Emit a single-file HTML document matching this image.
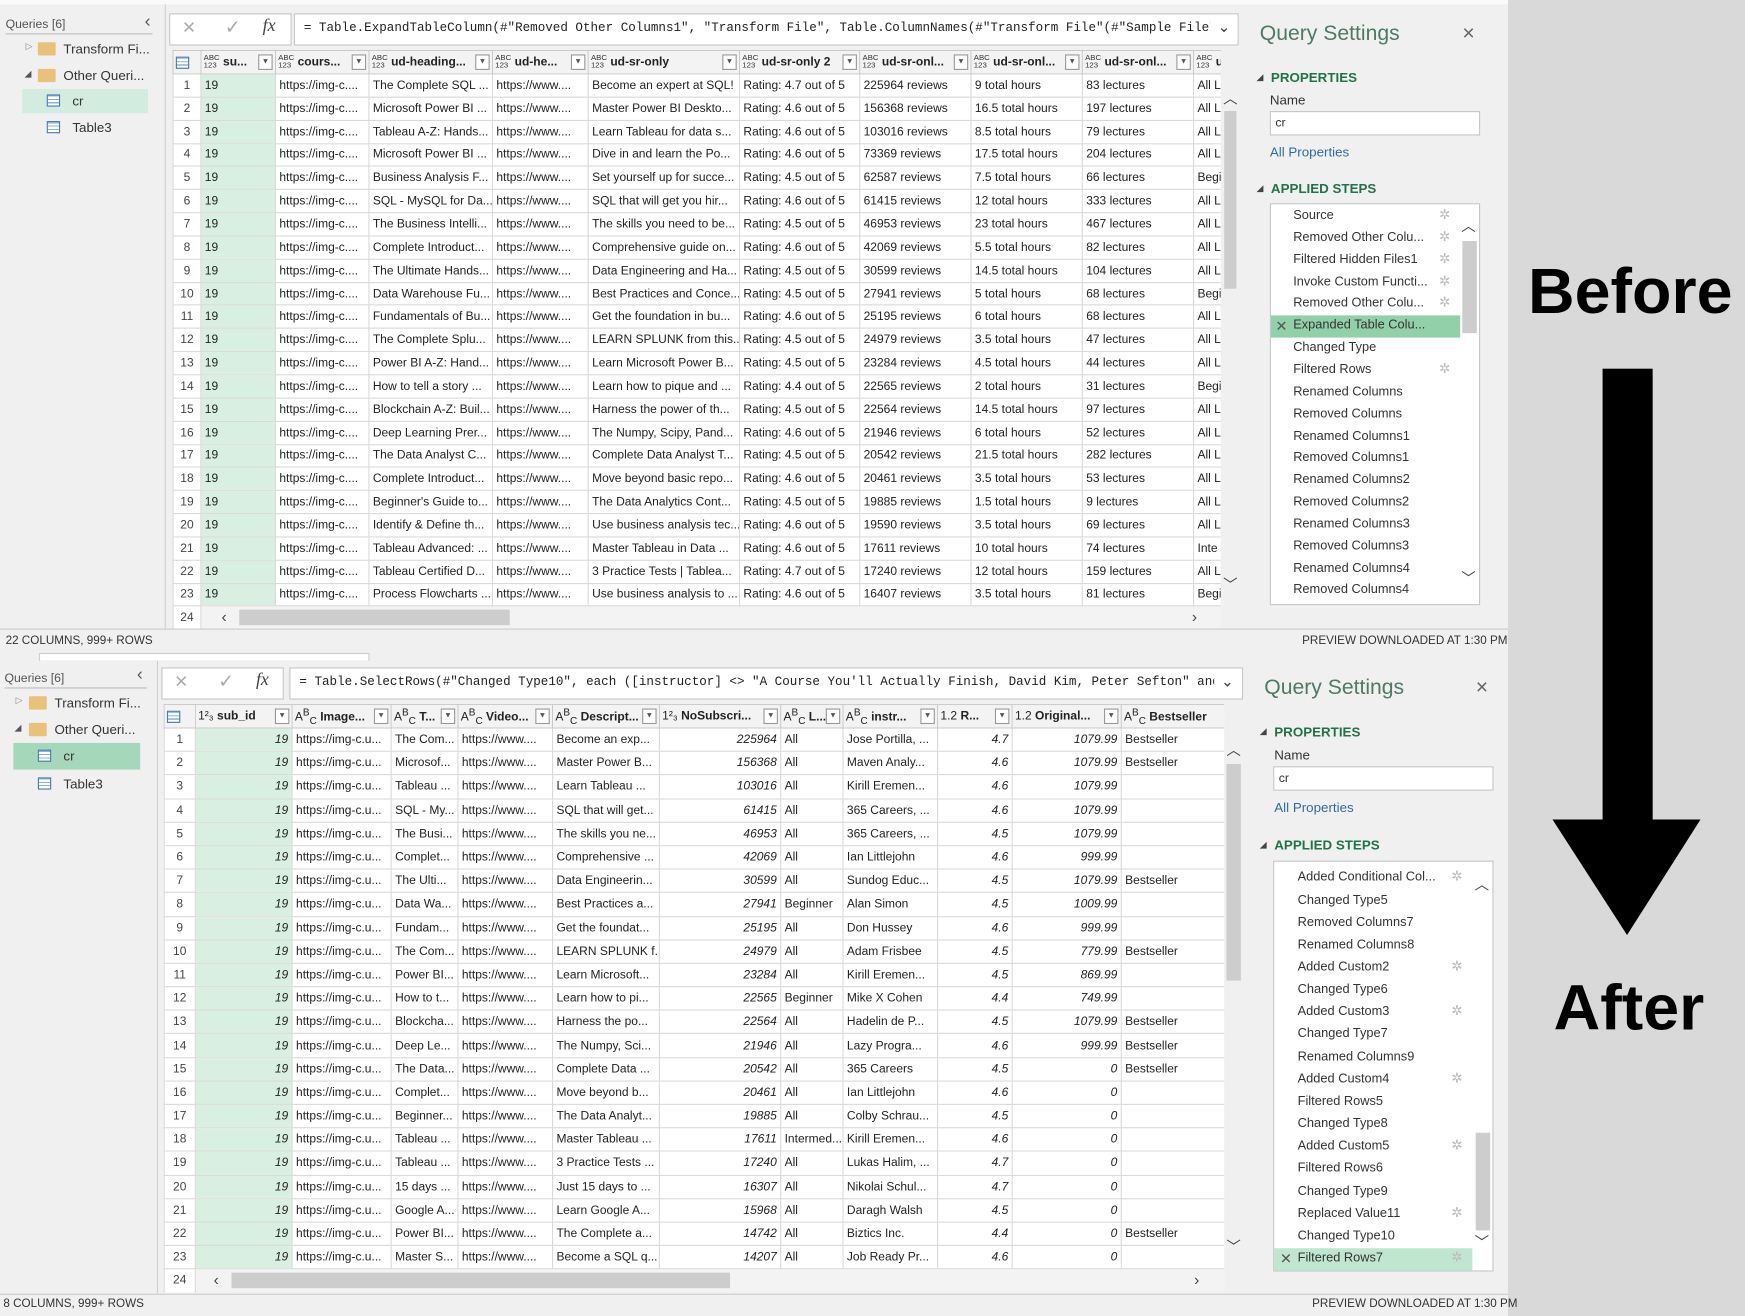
<!DOCTYPE html>
<html><head><meta charset="utf-8"><style>
*{box-sizing:border-box;margin:0;padding:0}
html,body{width:1745px;height:1316px;overflow:hidden;background:#d9d9d9;font-family:"Liberation Sans",sans-serif}
#w{position:absolute;left:0;top:0;width:1568px;height:1185px;transform:scale(1.1129,1.1105);transform-origin:0 0;background:#d9d9d9}
.a{position:absolute}
.panel{background:#f0f0f0}
.t{position:absolute;font-size:11.5px;color:#333;white-space:nowrap}
table{border-collapse:collapse;table-layout:fixed;font-size:10.8px;color:#222}
td{border:1px solid #dadada;padding:0 3px;white-space:nowrap;overflow:hidden;background:#fff}
td.n{text-align:center;color:#444}
td.g{background:#d9efe2}
td.r{text-align:right;font-style:italic}
th{border:1px solid #c9c9c9;background:#f3f3f3;font-weight:bold;font-size:10.8px;text-align:left;padding:0 2px;white-space:nowrap;overflow:hidden;position:relative}
.ty{display:inline-block;font-size:7px;line-height:7px;vertical-align:middle;font-weight:normal;margin-right:3px;color:#333}
.dd{position:absolute;right:2px;top:3px;width:13px;height:14px;border:1px solid #999;background:#fff;font-size:7px;text-align:center;line-height:12px;color:#555;font-weight:normal}
.fb{position:absolute;background:#fff;border:1px solid #c6c6c6;overflow:hidden}
.mono{font-family:"Liberation Mono",monospace;font-size:11.3px;color:#222}
.qs{font-size:19px;color:#4d7a62}
.hd{font-size:12px;font-weight:bold;color:#217346}
.step{position:absolute;font-size:11.5px;color:#333;white-space:nowrap}
.gear{position:absolute;font-size:12px;color:#bbb}
.fold{position:absolute;width:16px;height:12px;background:#e8c27a;border-radius:1px}
.tic{position:absolute;width:12px;height:11px;border:1px solid #4a7cb5;background:repeating-linear-gradient(0deg,#fff 0 2px,#8fb0d6 2px 3px)}
</style></head><body><div id="w">

<div class="a panel" style="left:0;top:0;width:1355px;height:566px"></div>
<div class="a" style="left:1355px;top:0;width:213px;height:1185px;background:#d9d9d9"></div>
<div class="a" style="left:0;top:0;width:1355px;height:4px;background:#fafafa"></div>
<div class="t" style="left:5px;top:16px;font-size:11px;color:#555">Queries [6]</div>
<div class="a" style="left:5px;top:30px;width:132px;height:1px;background:#bbb"></div>
<div class="t" style="left:130px;top:11px;font-size:16px;color:#555">‹</div>
<div class="t" style="left:23px;top:37px;font-size:8px;color:#888">▷</div>
<div class="fold" style="left:34px;top:38px"></div>
<div class="t" style="left:57px;top:37px;font-size:12px">Transform Fi...</div>
<div class="t" style="left:22px;top:62px;font-size:8px;color:#555">◢</div>
<div class="fold" style="left:34px;top:62px"></div>
<div class="t" style="left:57px;top:61px;font-size:12px">Other Queri...</div>
<div class="a" style="left:20px;top:80px;width:113px;height:22px;background:#d3ece0"></div>
<div class="tic" style="left:42px;top:85px"></div>
<div class="t" style="left:65px;top:84px;font-size:12px">cr</div>
<div class="tic" style="left:42px;top:109px"></div>
<div class="t" style="left:65px;top:108px;font-size:12px">Table3</div>
<div class="a" style="left:148px;top:4px;width:1px;height:562px;background:#d0d0d0"></div>

<div class="fb" style="left:152px;top:12px;width:110px;height:29px"></div>
<div class="t" style="left:164px;top:14px;font-size:20px;color:#aaa">×</div>
<div class="t" style="left:202px;top:15px;font-size:17px;color:#aaa">✓</div>
<div class="t" style="left:236px;top:15px;font-size:16px;font-style:italic;font-family:'Liberation Serif',serif;color:#444">fx</div>
<div class="fb" style="left:264px;top:12px;width:849px;height:29px"><div class="t mono" style="left:8px;top:7px">= Table.ExpandTableColumn(#"Removed Other Columns1", "Transform File", Table.ColumnNames(#"Transform File"(#"Sample File")))</div></div>
<div class="a" style="left:1088px;top:13px;width:24px;height:27px;background:#fff"></div>
<div class="t" style="left:1094px;top:16px;font-size:14px;color:#444">⌄</div>

<div class="a" style="left:155px;top:45px;width:942px;height:521px;overflow:hidden;background:#fff">
<table style="width:942px">
<colgroup><col style="width:25px"><col style="width:67px"><col style="width:84px"><col style="width:111px"><col style="width:86px"><col style="width:136px"><col style="width:108px"><col style="width:100px"><col style="width:100px"><col style="width:100px"><col style="width:25px"></colgroup>
<tr style="height:21px"><th><span class="tic" style="position:static;display:inline-block;vertical-align:middle"></span></th><th><span class="ty">ABC<br>123</span>su...<span class="dd">▼</span></th><th><span class="ty">ABC<br>123</span>cours...<span class="dd">▼</span></th><th><span class="ty">ABC<br>123</span>ud-heading...<span class="dd">▼</span></th><th><span class="ty">ABC<br>123</span>ud-he...<span class="dd">▼</span></th><th><span class="ty">ABC<br>123</span>ud-sr-only<span class="dd">▼</span></th><th><span class="ty">ABC<br>123</span>ud-sr-only 2<span class="dd">▼</span></th><th><span class="ty">ABC<br>123</span>ud-sr-onl...<span class="dd">▼</span></th><th><span class="ty">ABC<br>123</span>ud-sr-onl...<span class="dd">▼</span></th><th><span class="ty">ABC<br>123</span>ud-sr-onl...<span class="dd">▼</span></th><th><span class="ty">ABC<br>123</span>ud-</th></tr>
<tr style="height:20.85px"><td class="n">1</td><td class="g">19</td><td>https://img-c....</td><td>The Complete SQL ...</td><td>https://www....</td><td>Become an expert at SQL!</td><td>Rating: 4.7 out of 5</td><td>225964 reviews</td><td>9 total hours</td><td>83 lectures</td><td>All L</td></tr>
<tr style="height:20.85px"><td class="n">2</td><td class="g">19</td><td>https://img-c....</td><td>Microsoft Power BI ...</td><td>https://www....</td><td>Master Power BI Deskto...</td><td>Rating: 4.6 out of 5</td><td>156368 reviews</td><td>16.5 total hours</td><td>197 lectures</td><td>All L</td></tr>
<tr style="height:20.85px"><td class="n">3</td><td class="g">19</td><td>https://img-c....</td><td>Tableau A-Z: Hands...</td><td>https://www....</td><td>Learn Tableau for data s...</td><td>Rating: 4.6 out of 5</td><td>103016 reviews</td><td>8.5 total hours</td><td>79 lectures</td><td>All L</td></tr>
<tr style="height:20.85px"><td class="n">4</td><td class="g">19</td><td>https://img-c....</td><td>Microsoft Power BI ...</td><td>https://www....</td><td>Dive in and learn the Po...</td><td>Rating: 4.6 out of 5</td><td>73369 reviews</td><td>17.5 total hours</td><td>204 lectures</td><td>All L</td></tr>
<tr style="height:20.85px"><td class="n">5</td><td class="g">19</td><td>https://img-c....</td><td>Business Analysis F...</td><td>https://www....</td><td>Set yourself up for succe...</td><td>Rating: 4.5 out of 5</td><td>62587 reviews</td><td>7.5 total hours</td><td>66 lectures</td><td>Begi</td></tr>
<tr style="height:20.85px"><td class="n">6</td><td class="g">19</td><td>https://img-c....</td><td>SQL - MySQL for Da...</td><td>https://www....</td><td>SQL that will get you hir...</td><td>Rating: 4.6 out of 5</td><td>61415 reviews</td><td>12 total hours</td><td>333 lectures</td><td>All L</td></tr>
<tr style="height:20.85px"><td class="n">7</td><td class="g">19</td><td>https://img-c....</td><td>The Business Intelli...</td><td>https://www....</td><td>The skills you need to be...</td><td>Rating: 4.5 out of 5</td><td>46953 reviews</td><td>23 total hours</td><td>467 lectures</td><td>All L</td></tr>
<tr style="height:20.85px"><td class="n">8</td><td class="g">19</td><td>https://img-c....</td><td>Complete Introduct...</td><td>https://www....</td><td>Comprehensive guide on...</td><td>Rating: 4.6 out of 5</td><td>42069 reviews</td><td>5.5 total hours</td><td>82 lectures</td><td>All L</td></tr>
<tr style="height:20.85px"><td class="n">9</td><td class="g">19</td><td>https://img-c....</td><td>The Ultimate Hands...</td><td>https://www....</td><td>Data Engineering and Ha...</td><td>Rating: 4.5 out of 5</td><td>30599 reviews</td><td>14.5 total hours</td><td>104 lectures</td><td>All L</td></tr>
<tr style="height:20.85px"><td class="n">10</td><td class="g">19</td><td>https://img-c....</td><td>Data Warehouse Fu...</td><td>https://www....</td><td>Best Practices and Conce...</td><td>Rating: 4.5 out of 5</td><td>27941 reviews</td><td>5 total hours</td><td>68 lectures</td><td>Begi</td></tr>
<tr style="height:20.85px"><td class="n">11</td><td class="g">19</td><td>https://img-c....</td><td>Fundamentals of Bu...</td><td>https://www....</td><td>Get the foundation in bu...</td><td>Rating: 4.6 out of 5</td><td>25195 reviews</td><td>6 total hours</td><td>68 lectures</td><td>All L</td></tr>
<tr style="height:20.85px"><td class="n">12</td><td class="g">19</td><td>https://img-c....</td><td>The Complete Splu...</td><td>https://www....</td><td>LEARN SPLUNK from this...</td><td>Rating: 4.5 out of 5</td><td>24979 reviews</td><td>3.5 total hours</td><td>47 lectures</td><td>All L</td></tr>
<tr style="height:20.85px"><td class="n">13</td><td class="g">19</td><td>https://img-c....</td><td>Power BI A-Z: Hand...</td><td>https://www....</td><td>Learn Microsoft Power B...</td><td>Rating: 4.5 out of 5</td><td>23284 reviews</td><td>4.5 total hours</td><td>44 lectures</td><td>All L</td></tr>
<tr style="height:20.85px"><td class="n">14</td><td class="g">19</td><td>https://img-c....</td><td>How to tell a story ...</td><td>https://www....</td><td>Learn how to pique and ...</td><td>Rating: 4.4 out of 5</td><td>22565 reviews</td><td>2 total hours</td><td>31 lectures</td><td>Begi</td></tr>
<tr style="height:20.85px"><td class="n">15</td><td class="g">19</td><td>https://img-c....</td><td>Blockchain A-Z: Buil...</td><td>https://www....</td><td>Harness the power of th...</td><td>Rating: 4.5 out of 5</td><td>22564 reviews</td><td>14.5 total hours</td><td>97 lectures</td><td>All L</td></tr>
<tr style="height:20.85px"><td class="n">16</td><td class="g">19</td><td>https://img-c....</td><td>Deep Learning Prer...</td><td>https://www....</td><td>The Numpy, Scipy, Pand...</td><td>Rating: 4.6 out of 5</td><td>21946 reviews</td><td>6 total hours</td><td>52 lectures</td><td>All L</td></tr>
<tr style="height:20.85px"><td class="n">17</td><td class="g">19</td><td>https://img-c....</td><td>The Data Analyst C...</td><td>https://www....</td><td>Complete Data Analyst T...</td><td>Rating: 4.5 out of 5</td><td>20542 reviews</td><td>21.5 total hours</td><td>282 lectures</td><td>All L</td></tr>
<tr style="height:20.85px"><td class="n">18</td><td class="g">19</td><td>https://img-c....</td><td>Complete Introduct...</td><td>https://www....</td><td>Move beyond basic repo...</td><td>Rating: 4.6 out of 5</td><td>20461 reviews</td><td>3.5 total hours</td><td>53 lectures</td><td>All L</td></tr>
<tr style="height:20.85px"><td class="n">19</td><td class="g">19</td><td>https://img-c....</td><td>Beginner's Guide to...</td><td>https://www....</td><td>The Data Analytics Cont...</td><td>Rating: 4.5 out of 5</td><td>19885 reviews</td><td>1.5 total hours</td><td>9 lectures</td><td>All L</td></tr>
<tr style="height:20.85px"><td class="n">20</td><td class="g">19</td><td>https://img-c....</td><td>Identify &amp; Define th...</td><td>https://www....</td><td>Use business analysis tec...</td><td>Rating: 4.6 out of 5</td><td>19590 reviews</td><td>3.5 total hours</td><td>69 lectures</td><td>All L</td></tr>
<tr style="height:20.85px"><td class="n">21</td><td class="g">19</td><td>https://img-c....</td><td>Tableau Advanced: ...</td><td>https://www....</td><td>Master Tableau in Data ...</td><td>Rating: 4.6 out of 5</td><td>17611 reviews</td><td>10 total hours</td><td>74 lectures</td><td>Inte</td></tr>
<tr style="height:20.85px"><td class="n">22</td><td class="g">19</td><td>https://img-c....</td><td>Tableau Certified D...</td><td>https://www....</td><td>3 Practice Tests | Tablea...</td><td>Rating: 4.7 out of 5</td><td>17240 reviews</td><td>12 total hours</td><td>159 lectures</td><td>All L</td></tr>
<tr style="height:20.85px"><td class="n">23</td><td class="g">19</td><td>https://img-c....</td><td>Process Flowcharts ...</td><td>https://www....</td><td>Use business analysis to ...</td><td>Rating: 4.6 out of 5</td><td>16407 reviews</td><td>3.5 total hours</td><td>81 lectures</td><td>Begi</td></tr>
<tr style="height:20.85px"><td class="n">24</td><td colspan="10" style="background:#f3f3f3"></td></tr>
</table></div>
<div class="a" style="left:1097px;top:73px;width:16px;height:472px;background:#f0f0f0"></div>
<div class="t" style="left:1099px;top:78px;font-size:13px;color:#444">︿</div>
<div class="a" style="left:1100px;top:100px;width:11px;height:160px;background:#cdcdcd"></div>
<div class="t" style="left:1099px;top:516px;font-size:13px;color:#444">﹀</div>
<div class="t" style="left:199px;top:547px;font-size:14px;color:#444">‹</div>
<div class="a" style="left:215px;top:549px;width:243px;height:14px;background:#cdcdcd"></div>
<div class="t" style="left:1071px;top:547px;font-size:14px;color:#444">›</div>

<div class="t qs" style="left:1132px;top:20px">Query Settings</div>
<div class="t" style="left:1314px;top:20px;font-size:19px;color:#666">×</div>
<div class="t" style="left:1129px;top:65px;font-size:8px;color:#444">◢</div>
<div class="t hd" style="left:1142px;top:63px">PROPERTIES</div>
<div class="t" style="left:1141px;top:83px;font-size:12px">Name</div>
<div class="fb" style="left:1141px;top:100px;width:189px;height:22px"></div>
<div class="t" style="left:1146px;top:105px;font-size:11px">cr</div>
<div class="t" style="left:1141px;top:130px;font-size:12px;color:#2f6aa8">All Properties</div>
<div class="t" style="left:1129px;top:165px;font-size:8px;color:#444">◢</div>
<div class="t hd" style="left:1142px;top:163px">APPLIED STEPS</div>
<div class="fb" style="left:1141px;top:183px;width:189px;height:362px"></div>
<div class="a" style="left:1142px;top:284px;width:170px;height:20px;background:#92d0aa"></div>
<div class="a" style="left:1314px;top:217px;width:13px;height:83px;background:#cdcdcd"></div>
<div class="t" style="left:1313px;top:193px;font-size:13px;color:#444">︿</div>
<div class="t" style="left:1313px;top:510px;font-size:13px;color:#444">﹀</div>
<div class="step" style="left:1162px;top:188px">Source</div><div class="gear" style="left:1293px;top:186px">✲</div>
<div class="step" style="left:1162px;top:208px">Removed Other Colu...</div><div class="gear" style="left:1293px;top:206px">✲</div>
<div class="step" style="left:1162px;top:228px">Filtered Hidden Files1</div><div class="gear" style="left:1293px;top:226px">✲</div>
<div class="step" style="left:1162px;top:248px">Invoke Custom Functi...</div><div class="gear" style="left:1293px;top:246px">✲</div>
<div class="step" style="left:1162px;top:267px">Removed Other Colu...</div><div class="gear" style="left:1293px;top:265px">✲</div>
<div class="step" style="left:1146px;top:286px;font-size:13px;color:#555">✕</div>
<div class="step" style="left:1162px;top:287px">Expanded Table Colu...</div>
<div class="step" style="left:1162px;top:307px">Changed Type</div>
<div class="step" style="left:1162px;top:327px">Filtered Rows</div><div class="gear" style="left:1293px;top:325px">✲</div>
<div class="step" style="left:1162px;top:347px">Renamed Columns</div>
<div class="step" style="left:1162px;top:367px">Removed Columns</div>
<div class="step" style="left:1162px;top:387px">Renamed Columns1</div>
<div class="step" style="left:1162px;top:406px">Removed Columns1</div>
<div class="step" style="left:1162px;top:426px">Renamed Columns2</div>
<div class="step" style="left:1162px;top:446px">Removed Columns2</div>
<div class="step" style="left:1162px;top:466px">Renamed Columns3</div>
<div class="step" style="left:1162px;top:486px">Removed Columns3</div>
<div class="step" style="left:1162px;top:506px">Renamed Columns4</div>
<div class="step" style="left:1162px;top:525px">Removed Columns4</div>

<div class="a panel" style="left:0;top:566px;width:1355px;height:30px;background:#f0f0f0"></div>
<div class="a" style="left:0;top:566px;width:1355px;height:1px;background:#ccc"></div>
<div class="t" style="left:5px;top:571px;font-size:10.5px">22 COLUMNS, 999+ ROWS</div>
<div class="t" style="left:1170px;top:571px;font-size:10.5px">PREVIEW DOWNLOADED AT 1:30 PM</div>
<div class="a" style="left:35px;top:588px;width:297px;height:8px;background:#fff;border:1px solid #ccc"></div>

<div class="a panel" style="left:0;top:595px;width:1355px;height:590px"></div>
<div class="t" style="left:4px;top:605px;font-size:11px;color:#555">Queries [6]</div>
<div class="a" style="left:4px;top:619px;width:128px;height:1px;background:#bbb"></div>
<div class="t" style="left:123px;top:599px;font-size:16px;color:#555">‹</div>
<div class="t" style="left:14px;top:626px;font-size:8px;color:#888">▷</div>
<div class="fold" style="left:26px;top:627px"></div>
<div class="t" style="left:49px;top:626px;font-size:12px">Transform Fi...</div>
<div class="t" style="left:13px;top:651px;font-size:8px;color:#555">◢</div>
<div class="fold" style="left:26px;top:651px"></div>
<div class="t" style="left:49px;top:650px;font-size:12px">Other Queri...</div>
<div class="a" style="left:12px;top:669px;width:114px;height:24px;background:#a5d8ba"></div>
<div class="tic" style="left:34px;top:675px"></div>
<div class="t" style="left:57px;top:674px;font-size:12px">cr</div>
<div class="tic" style="left:34px;top:700px"></div>
<div class="t" style="left:57px;top:699px;font-size:12px">Table3</div>
<div class="a" style="left:141px;top:595px;width:1px;height:570px;background:#d0d0d0"></div>

<div class="fb" style="left:145px;top:601px;width:110px;height:29px"></div>
<div class="t" style="left:157px;top:603px;font-size:20px;color:#aaa">×</div>
<div class="t" style="left:196px;top:604px;font-size:17px;color:#aaa">✓</div>
<div class="t" style="left:230px;top:604px;font-size:16px;font-style:italic;font-family:'Liberation Serif',serif;color:#444">fx</div>
<div class="fb" style="left:260px;top:601px;width:857px;height:29px"><div class="t mono" style="left:8px;top:7px">= Table.SelectRows(#"Changed Type10", each ([instructor] &lt;&gt; "A Course You'll Actually Finish, David Kim, Peter Sefton" and</div></div>
<div class="a" style="left:1091px;top:602px;width:25px;height:27px;background:#fff"></div>
<div class="t" style="left:1097px;top:605px;font-size:14px;color:#444">⌄</div>

<div class="a" style="left:147px;top:634px;width:953px;height:530px;overflow:hidden;background:#fff">
<table style="width:963px">
<colgroup><col style="width:28px"><col style="width:87px"><col style="width:89px"><col style="width:60px"><col style="width:85px"><col style="width:96px"><col style="width:109px"><col style="width:56px"><col style="width:85px"><col style="width:67px"><col style="width:98px"><col style="width:103px"></colgroup>
<tr style="height:21px"><th><span class="tic" style="position:static;display:inline-block;vertical-align:middle"></span></th><th><span style="font-weight:normal">1²₃</span> sub_id<span class="dd">▼</span></th><th><span style="font-weight:normal">A<sup>B</sup><sub>C</sub></span> Image...<span class="dd">▼</span></th><th><span style="font-weight:normal">A<sup>B</sup><sub>C</sub></span> T...<span class="dd">▼</span></th><th><span style="font-weight:normal">A<sup>B</sup><sub>C</sub></span> Video...<span class="dd">▼</span></th><th><span style="font-weight:normal">A<sup>B</sup><sub>C</sub></span> Descript...<span class="dd">▼</span></th><th><span style="font-weight:normal">1²₃</span> NoSubscri...<span class="dd">▼</span></th><th><span style="font-weight:normal">A<sup>B</sup><sub>C</sub></span> L...<span class="dd">▼</span></th><th><span style="font-weight:normal">A<sup>B</sup><sub>C</sub></span> instr...<span class="dd">▼</span></th><th><span style="font-weight:normal">1.2</span> R...<span class="dd">▼</span></th><th><span style="font-weight:normal">1.2</span> Original...<span class="dd">▼</span></th><th><span style="font-weight:normal">A<sup>B</sup><sub>C</sub></span> Bestseller</th></tr>
<tr style="height:21.2px"><td class="n">1</td><td class="g r">19</td><td>https://img-c.u...</td><td>The Com...</td><td>https://www....</td><td>Become an exp...</td><td class="r">225964</td><td>All</td><td>Jose Portilla, ...</td><td class="r">4.7</td><td class="r">1079.99</td><td>Bestseller</td></tr>
<tr style="height:21.2px"><td class="n">2</td><td class="g r">19</td><td>https://img-c.u...</td><td>Microsof...</td><td>https://www....</td><td>Master Power B...</td><td class="r">156368</td><td>All</td><td>Maven Analy...</td><td class="r">4.6</td><td class="r">1079.99</td><td>Bestseller</td></tr>
<tr style="height:21.2px"><td class="n">3</td><td class="g r">19</td><td>https://img-c.u...</td><td>Tableau ...</td><td>https://www....</td><td>Learn Tableau ...</td><td class="r">103016</td><td>All</td><td>Kirill Eremen...</td><td class="r">4.6</td><td class="r">1079.99</td><td></td></tr>
<tr style="height:21.2px"><td class="n">4</td><td class="g r">19</td><td>https://img-c.u...</td><td>SQL - My...</td><td>https://www....</td><td>SQL that will get...</td><td class="r">61415</td><td>All</td><td>365 Careers, ...</td><td class="r">4.6</td><td class="r">1079.99</td><td></td></tr>
<tr style="height:21.2px"><td class="n">5</td><td class="g r">19</td><td>https://img-c.u...</td><td>The Busi...</td><td>https://www....</td><td>The skills you ne...</td><td class="r">46953</td><td>All</td><td>365 Careers, ...</td><td class="r">4.5</td><td class="r">1079.99</td><td></td></tr>
<tr style="height:21.2px"><td class="n">6</td><td class="g r">19</td><td>https://img-c.u...</td><td>Complet...</td><td>https://www....</td><td>Comprehensive ...</td><td class="r">42069</td><td>All</td><td>Ian Littlejohn</td><td class="r">4.6</td><td class="r">999.99</td><td></td></tr>
<tr style="height:21.2px"><td class="n">7</td><td class="g r">19</td><td>https://img-c.u...</td><td>The Ulti...</td><td>https://www....</td><td>Data Engineerin...</td><td class="r">30599</td><td>All</td><td>Sundog Educ...</td><td class="r">4.5</td><td class="r">1079.99</td><td>Bestseller</td></tr>
<tr style="height:21.2px"><td class="n">8</td><td class="g r">19</td><td>https://img-c.u...</td><td>Data Wa...</td><td>https://www....</td><td>Best Practices a...</td><td class="r">27941</td><td>Beginner</td><td>Alan Simon</td><td class="r">4.5</td><td class="r">1009.99</td><td></td></tr>
<tr style="height:21.2px"><td class="n">9</td><td class="g r">19</td><td>https://img-c.u...</td><td>Fundam...</td><td>https://www....</td><td>Get the foundat...</td><td class="r">25195</td><td>All</td><td>Don Hussey</td><td class="r">4.6</td><td class="r">999.99</td><td></td></tr>
<tr style="height:21.2px"><td class="n">10</td><td class="g r">19</td><td>https://img-c.u...</td><td>The Com...</td><td>https://www....</td><td>LEARN SPLUNK f...</td><td class="r">24979</td><td>All</td><td>Adam Frisbee</td><td class="r">4.5</td><td class="r">779.99</td><td>Bestseller</td></tr>
<tr style="height:21.2px"><td class="n">11</td><td class="g r">19</td><td>https://img-c.u...</td><td>Power BI...</td><td>https://www....</td><td>Learn Microsoft...</td><td class="r">23284</td><td>All</td><td>Kirill Eremen...</td><td class="r">4.5</td><td class="r">869.99</td><td></td></tr>
<tr style="height:21.2px"><td class="n">12</td><td class="g r">19</td><td>https://img-c.u...</td><td>How to t...</td><td>https://www....</td><td>Learn how to pi...</td><td class="r">22565</td><td>Beginner</td><td>Mike X Cohen</td><td class="r">4.4</td><td class="r">749.99</td><td></td></tr>
<tr style="height:21.2px"><td class="n">13</td><td class="g r">19</td><td>https://img-c.u...</td><td>Blockcha...</td><td>https://www....</td><td>Harness the po...</td><td class="r">22564</td><td>All</td><td>Hadelin de P...</td><td class="r">4.5</td><td class="r">1079.99</td><td>Bestseller</td></tr>
<tr style="height:21.2px"><td class="n">14</td><td class="g r">19</td><td>https://img-c.u...</td><td>Deep Le...</td><td>https://www....</td><td>The Numpy, Sci...</td><td class="r">21946</td><td>All</td><td>Lazy Progra...</td><td class="r">4.6</td><td class="r">999.99</td><td>Bestseller</td></tr>
<tr style="height:21.2px"><td class="n">15</td><td class="g r">19</td><td>https://img-c.u...</td><td>The Data...</td><td>https://www....</td><td>Complete Data ...</td><td class="r">20542</td><td>All</td><td>365 Careers</td><td class="r">4.5</td><td class="r">0</td><td>Bestseller</td></tr>
<tr style="height:21.2px"><td class="n">16</td><td class="g r">19</td><td>https://img-c.u...</td><td>Complet...</td><td>https://www....</td><td>Move beyond b...</td><td class="r">20461</td><td>All</td><td>Ian Littlejohn</td><td class="r">4.6</td><td class="r">0</td><td></td></tr>
<tr style="height:21.2px"><td class="n">17</td><td class="g r">19</td><td>https://img-c.u...</td><td>Beginner...</td><td>https://www....</td><td>The Data Analyt...</td><td class="r">19885</td><td>All</td><td>Colby Schrau...</td><td class="r">4.5</td><td class="r">0</td><td></td></tr>
<tr style="height:21.2px"><td class="n">18</td><td class="g r">19</td><td>https://img-c.u...</td><td>Tableau ...</td><td>https://www....</td><td>Master Tableau ...</td><td class="r">17611</td><td>Intermed...</td><td>Kirill Eremen...</td><td class="r">4.6</td><td class="r">0</td><td></td></tr>
<tr style="height:21.2px"><td class="n">19</td><td class="g r">19</td><td>https://img-c.u...</td><td>Tableau ...</td><td>https://www....</td><td>3 Practice Tests ...</td><td class="r">17240</td><td>All</td><td>Lukas Halim, ...</td><td class="r">4.7</td><td class="r">0</td><td></td></tr>
<tr style="height:21.2px"><td class="n">20</td><td class="g r">19</td><td>https://img-c.u...</td><td>15 days ...</td><td>https://www....</td><td>Just 15 days to ...</td><td class="r">16307</td><td>All</td><td>Nikolai Schul...</td><td class="r">4.7</td><td class="r">0</td><td></td></tr>
<tr style="height:21.2px"><td class="n">21</td><td class="g r">19</td><td>https://img-c.u...</td><td>Google A...</td><td>https://www....</td><td>Learn Google A...</td><td class="r">15968</td><td>All</td><td>Daragh Walsh</td><td class="r">4.5</td><td class="r">0</td><td></td></tr>
<tr style="height:21.2px"><td class="n">22</td><td class="g r">19</td><td>https://img-c.u...</td><td>Power BI...</td><td>https://www....</td><td>The Complete a...</td><td class="r">14742</td><td>All</td><td>Biztics Inc.</td><td class="r">4.4</td><td class="r">0</td><td>Bestseller</td></tr>
<tr style="height:21.2px"><td class="n">23</td><td class="g r">19</td><td>https://img-c.u...</td><td>Master S...</td><td>https://www....</td><td>Become a SQL q...</td><td class="r">14207</td><td>All</td><td>Job Ready Pr...</td><td class="r">4.6</td><td class="r">0</td><td></td></tr>
<tr style="height:21.2px"><td class="n">24</td><td colspan="11" style="background:#f3f3f3"></td></tr>
</table></div>
<div class="a" style="left:1100px;top:655px;width:17px;height:488px;background:#f0f0f0"></div>
<div class="t" style="left:1102px;top:665px;font-size:13px;color:#444">︿</div>
<div class="a" style="left:1102px;top:688px;width:13px;height:195px;background:#cdcdcd"></div>
<div class="t" style="left:1102px;top:1112px;font-size:13px;color:#444">﹀</div>
<div class="t" style="left:192px;top:1144px;font-size:14px;color:#444">‹</div>
<div class="a" style="left:208px;top:1146px;width:448px;height:14px;background:#cdcdcd"></div>
<div class="t" style="left:1073px;top:1144px;font-size:14px;color:#444">›</div>

<div class="t qs" style="left:1136px;top:609px">Query Settings</div>
<div class="t" style="left:1326px;top:609px;font-size:19px;color:#666">×</div>
<div class="t" style="left:1132px;top:654px;font-size:8px;color:#444">◢</div>
<div class="t hd" style="left:1145px;top:652px">PROPERTIES</div>
<div class="t" style="left:1145px;top:673px;font-size:12px">Name</div>
<div class="fb" style="left:1144px;top:690px;width:198px;height:22px"></div>
<div class="t" style="left:1149px;top:695px;font-size:11px">cr</div>
<div class="t" style="left:1145px;top:720px;font-size:12px;color:#2f6aa8">All Properties</div>
<div class="t" style="left:1132px;top:756px;font-size:8px;color:#444">◢</div>
<div class="t hd" style="left:1145px;top:754px">APPLIED STEPS</div>
<div class="fb" style="left:1144px;top:775px;width:198px;height:370px"></div>
<div class="a" style="left:1145px;top:1124px;width:178px;height:20px;background:#bfe6cf"></div>
<div class="a" style="left:1326px;top:1020px;width:13px;height:88px;background:#cdcdcd"></div>
<div class="t" style="left:1325px;top:786px;font-size:13px;color:#444">︿</div>
<div class="t" style="left:1325px;top:1108px;font-size:13px;color:#444">﹀</div>
<div class="step" style="left:1166px;top:784px">Added Conditional Col...</div><div class="gear" style="left:1304px;top:782px">✲</div>
<div class="step" style="left:1166px;top:805px">Changed Type5</div>
<div class="step" style="left:1166px;top:825px">Removed Columns7</div>
<div class="step" style="left:1166px;top:845px">Renamed Columns8</div>
<div class="step" style="left:1166px;top:865px">Added Custom2</div><div class="gear" style="left:1304px;top:863px">✲</div>
<div class="step" style="left:1166px;top:885px">Changed Type6</div>
<div class="step" style="left:1166px;top:905px">Added Custom3</div><div class="gear" style="left:1304px;top:903px">✲</div>
<div class="step" style="left:1166px;top:925px">Changed Type7</div>
<div class="step" style="left:1166px;top:946px">Renamed Columns9</div>
<div class="step" style="left:1166px;top:966px">Added Custom4</div><div class="gear" style="left:1304px;top:964px">✲</div>
<div class="step" style="left:1166px;top:986px">Filtered Rows5</div>
<div class="step" style="left:1166px;top:1006px">Changed Type8</div>
<div class="step" style="left:1166px;top:1026px">Added Custom5</div><div class="gear" style="left:1304px;top:1024px">✲</div>
<div class="step" style="left:1166px;top:1046px">Filtered Rows6</div>
<div class="step" style="left:1166px;top:1067px">Changed Type9</div>
<div class="step" style="left:1166px;top:1087px">Replaced Value11</div><div class="gear" style="left:1304px;top:1085px">✲</div>
<div class="step" style="left:1166px;top:1107px">Changed Type10</div>
<div class="step" style="left:1150px;top:1126px;font-size:13px;color:#555">✕</div>
<div class="step" style="left:1166px;top:1127px">Filtered Rows7</div><div class="gear" style="left:1304px;top:1125px">✲</div>

<div class="a" style="left:0;top:1165px;width:1355px;height:20px;background:#f0f0f0;border-top:1px solid #ccc"></div>
<div class="t" style="left:3px;top:1168px;font-size:10.5px">8 COLUMNS, 999+ ROWS</div>
<div class="t" style="left:1179px;top:1168px;font-size:10.5px">PREVIEW DOWNLOADED AT 1:30 PM</div>

<div class="t" style="left:1373px;top:229px;font-size:58px;font-weight:bold;color:#000">Before</div>
<div class="a" style="left:1440px;top:332px;width:45px;height:410px;background:#000"></div>
<svg class="a" style="left:1395px;top:738px" width="133" height="105"><polygon points="0,0 133,0 67,104" fill="#000"/></svg>
<div class="t" style="left:1396px;top:874px;font-size:58px;font-weight:bold;color:#000">After</div>
</div></body></html>
